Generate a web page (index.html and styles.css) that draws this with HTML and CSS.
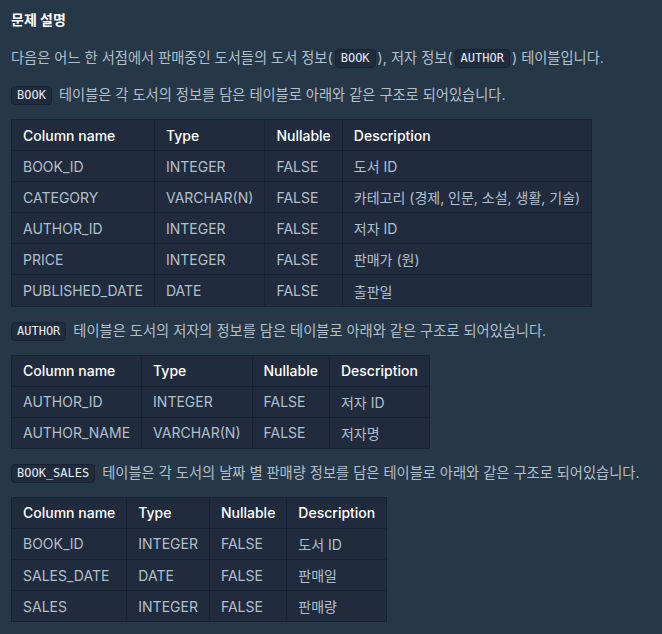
FILE: index.html
```html
<!DOCTYPE html>
<html lang="ko">
<head>
<meta charset="utf-8">
<link rel="stylesheet" href="styles.css">
</head>
<body>
<div class="desc">
  <h5 class="title">문제 설명</h5>
  <p>다음은 어느 한 서점에서 판매중인 도서들의 도서 정보(<code>BOOK</code>), 저자 정보(<code>AUTHOR</code>) 테이블입니다.</p>
  <p><code class="lead">BOOK</code> 테이블은 각 도서의 정보를 담은 테이블로 아래와 같은 구조로 되어있습니다.</p>
  <table>
    <thead><tr><th>Column name</th><th>Type</th><th>Nullable</th><th>Description</th></tr></thead>
    <tbody>
      <tr><td>BOOK_ID</td><td>INTEGER</td><td>FALSE</td><td>도서 ID</td></tr>
      <tr><td>CATEGORY</td><td>VARCHAR(N)</td><td>FALSE</td><td>카테고리 (경제, 인문, 소설, 생활, 기술)</td></tr>
      <tr><td>AUTHOR_ID</td><td>INTEGER</td><td>FALSE</td><td>저자 ID</td></tr>
      <tr><td>PRICE</td><td>INTEGER</td><td>FALSE</td><td>판매가 (원)</td></tr>
      <tr><td>PUBLISHED_DATE</td><td>DATE</td><td>FALSE</td><td>출판일</td></tr>
    </tbody>
  </table>
  <p><code class="lead">AUTHOR</code> 테이블은 도서의 저자의 정보를 담은 테이블로 아래와 같은 구조로 되어있습니다.</p>
  <table>
    <thead><tr><th>Column name</th><th>Type</th><th>Nullable</th><th>Description</th></tr></thead>
    <tbody>
      <tr><td>AUTHOR_ID</td><td>INTEGER</td><td>FALSE</td><td>저자 ID</td></tr>
      <tr><td>AUTHOR_NAME</td><td>VARCHAR(N)</td><td>FALSE</td><td>저자명</td></tr>
    </tbody>
  </table>
  <p><code class="lead">BOOK_SALES</code> 테이블은 각 도서의 날짜 별 판매량 정보를 담은 테이블로 아래와 같은 구조로 되어있습니다.</p>
  <table>
    <thead><tr><th>Column name</th><th>Type</th><th>Nullable</th><th>Description</th></tr></thead>
    <tbody>
      <tr><td>BOOK_ID</td><td>INTEGER</td><td>FALSE</td><td>도서 ID</td></tr>
      <tr><td>SALES_DATE</td><td>DATE</td><td>FALSE</td><td>판매일</td></tr>
      <tr><td>SALES</td><td>INTEGER</td><td>FALSE</td><td>판매량</td></tr>
    </tbody>
  </table>
</div>
</body>
</html>
```

FILE: styles.css
```css
html, body {
  margin: 0;
  padding: 0;
  background: #263747;
}
body {
  font-family: Inter, "Noto Sans CJK KR", sans-serif;
  color: #b2c0cc;
  font-size: 14px;
}
.desc {
  padding: 10px 11px;
}
.title {
  margin: 0;
  font-size: 14px;
  line-height: 20px;
  font-weight: 700;
  color: #ffffff;
}
p {
  margin: 12px 0;
  font-size: 14.25px;
  line-height: 24px;
}
.title + p {
  margin-top: 16px;
}
p + p {
  margin-top: 13px;
}
code {
  display: inline-block;
  font-family: "DejaVu Sans Mono", monospace;
  font-size: 12px;
  line-height: 17px;
  padding: 0 5px;
  margin: 0 2px;
  color: #e6edf3;
  background: #202b3d;
  border: 1px solid #172334;
  border-radius: 4px;
  vertical-align: 1px;
}
code.lead {
  margin-left: 0;
  margin-right: 3px;
}
table {
  border-collapse: collapse;
  background: #202b3d;
  margin: 0 0 12px;
  font-size: 14px;
}
th, td {
  border: 1px solid #172334;
  padding: 0 11px;
  height: 30.1px;
  text-align: left;
  white-space: nowrap;
}
th {
  color: #ffffff;
  font-weight: 500;
}
td {
  color: #b2c0cc;
}
```
